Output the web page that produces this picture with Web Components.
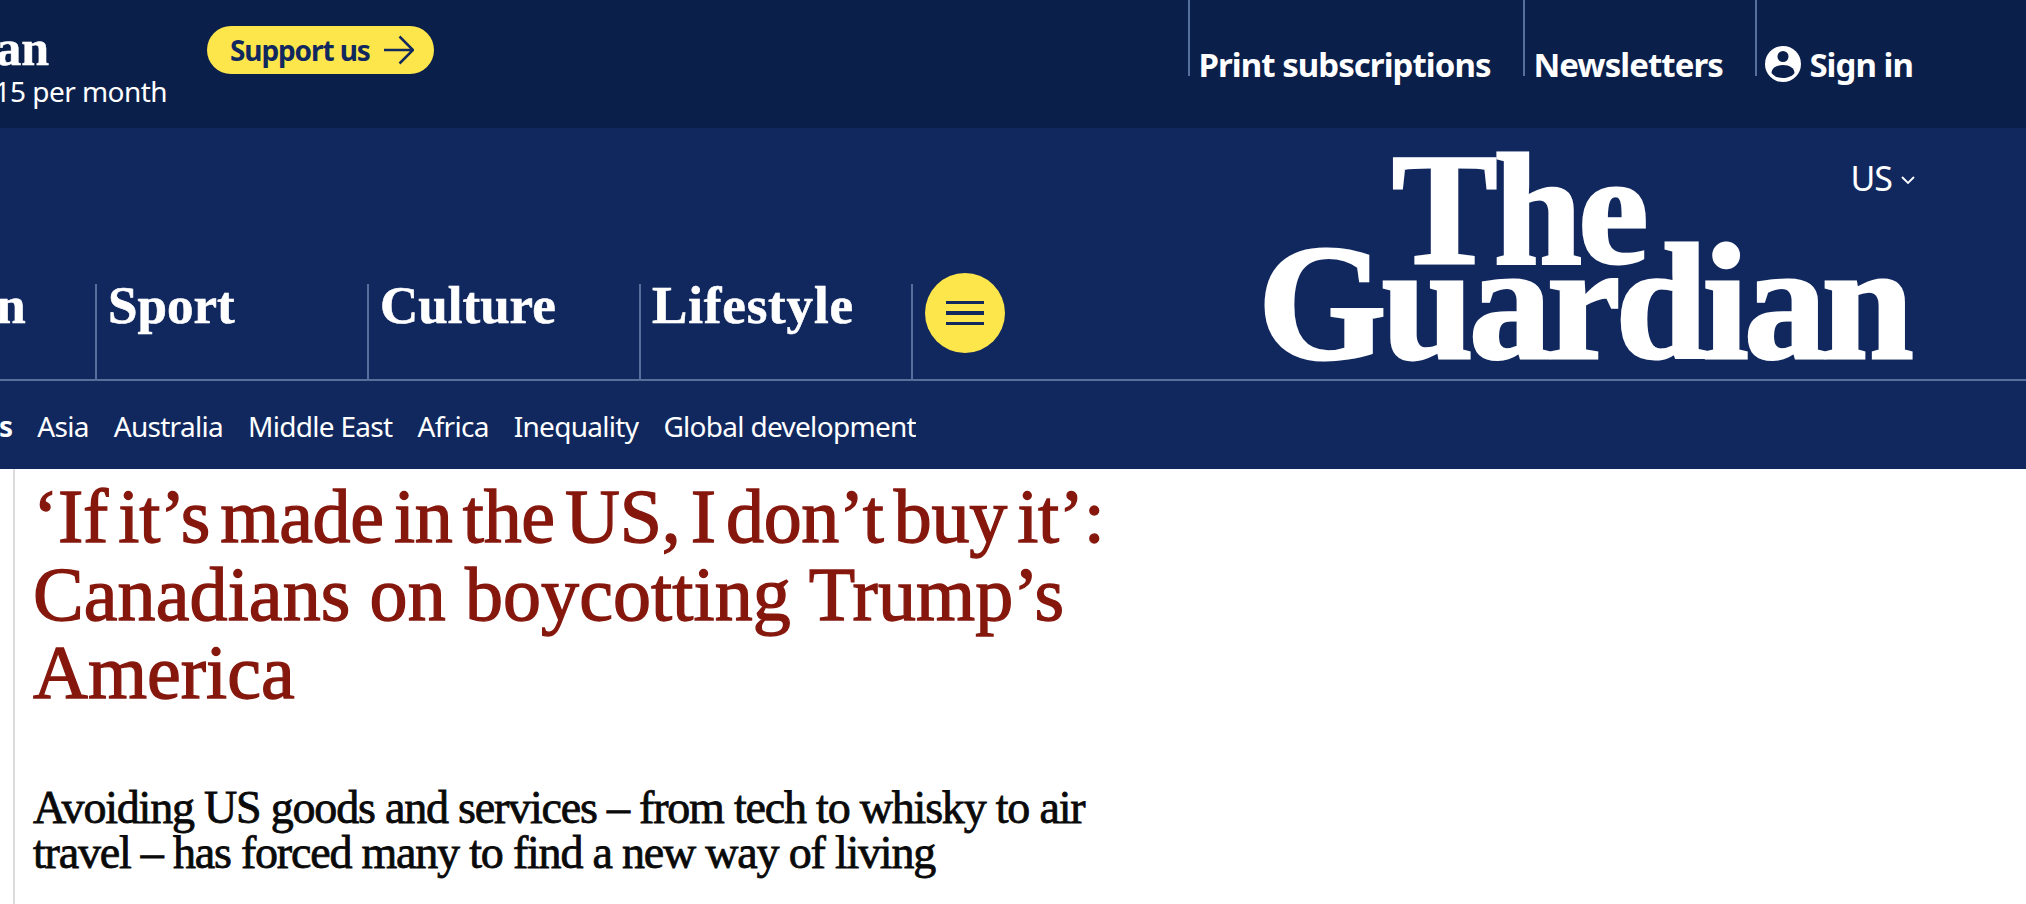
<!DOCTYPE html>
<html lang="en">
<head>
<meta charset="utf-8">
<title>The Guardian</title>
<style>
  html, body { margin: 0; padding: 0; background: #fff; overflow: hidden; }
  body { width: 2026px; height: 904px; font-family: "Liberation Serif", serif; }
</style>
</head>
<body>
<gu-topbar>
  <gu-reader-ask slot="ask"></gu-reader-ask>
  <gu-support-button slot="ask">Support us</gu-support-button>
  <gu-top-link slot="links" width="335">Print subscriptions</gu-top-link>
  <gu-top-link slot="links" width="232">Newsletters</gu-top-link>
  <gu-top-link slot="links" icon>Sign in</gu-top-link>
</gu-topbar>
<gu-masthead>
  <gu-pillar>News</gu-pillar>
  <gu-pillar style="letter-spacing: 0.7px">Opinion</gu-pillar>
  <gu-pillar>Sport</gu-pillar>
  <gu-pillar>Culture</gu-pillar>
  <gu-pillar style="letter-spacing: 0.85px">Lifestyle</gu-pillar>
</gu-masthead>
<gu-subnav></gu-subnav>
<gu-article>
  <span slot="headline" style="letter-spacing: -0.3px; word-spacing: -8.4px">‘If it’s made in the US, I don’t buy it’:</span>
  <span slot="headline" style="letter-spacing: 0.1px">Canadians on boycotting Trump’s</span>
  <span slot="headline">America</span>
  <span slot="standfirst">Avoiding US goods and services – from tech to whisky to air travel – has forced many to find a new way of living</span>
</gu-article>

<script>
const SANS = '"Noto Sans", "Open Sans", sans-serif';

//Barra superior oscura: bloque de apoyo a la izquierda, enlaces a la derecha.
class GuTopbar extends HTMLElement {
  constructor() {
    super();
    this.attachShadow({ mode: "open" });
    this.shadowRoot.innerHTML = `
      <style>
        :host { display: flex; justify-content: space-between; height: 128px; background: #0b1f4b; color: #fff; overflow: hidden; }
        .ask { display: flex; align-items: flex-start; }
        .links { display: flex; padding-right: 113px; }
      </style>
      <div class="ask"><slot name="ask"></slot></div>
      <div class="links"><slot name="links"></slot></div>
    `;
  }
}

class GuReaderAsk extends HTMLElement {
  constructor() {
    super();
    this.attachShadow({ mode: "open" });
    this.shadowRoot.innerHTML = `
      <style>
        :host { display: flex; justify-content: flex-end; width: 167px; height: 128px; overflow: hidden; white-space: nowrap; }
        div { display: flex; flex: none; flex-direction: column; align-items: flex-end; }
        .big { font: bold 50px/54px "Liberation Serif", serif; margin-top: 21px; padding-right: 118px; -webkit-text-stroke: 0.5px #fff; }
        .small { font: 28px/36px ${SANS}; letter-spacing: -0.55px; margin-top: -2px; }
      </style>
      <div>
        <span class="big">Support the Guardian</span>
        <span class="small">Fund the free press with $15 per month</span>
      </div>
    `;
  }
}

class GuSupportButton extends HTMLElement {
  constructor() {
    super();
    this.attachShadow({ mode: "open" });
    this.shadowRoot.innerHTML = `
      <style>
        :host { display: inline-flex; align-items: center; box-sizing: border-box; width: 227px; height: 48px; margin: 26px 0 0 40px; padding-left: 23px; gap: 14px;
                border-radius: 24px; background: #fde64b; color: #11285f; font: bold 28px/48px ${SANS}; letter-spacing: -1.1px; white-space: nowrap; }
        svg { width: 30px; height: 30px; flex: none; }
      </style>
      <slot></slot>
      <svg viewBox="0 0 30 30" fill="none" stroke="#11285f" stroke-width="2.500">
        <path d="M0 15h28.500M15.500 1.500L29 15 15.500 28.500"/>
      </svg>
    `;
  }
}

class GuTopLink extends HTMLElement {
  constructor() {
    super();
    this.attachShadow({ mode: "open" });
    const icon = this.hasAttribute("icon") ? `
      <svg viewBox="0 0 36 36">
        <circle cx="18" cy="18" r="18" fill="#fff"/>
        <circle cx="18" cy="10.500" r="5.500" fill="#0b1f4b"/>
        <path d="M6.500 27c0-5 5-8 11.500-8s11.500 3 11.500 8c-2.500 3.500-7 5-11.500 5s-9-1.500-11.500-5z" fill="#0b1f4b"/>
      </svg>` : "";
    this.shadowRoot.innerHTML = `
      <style>
        :host { display: flex; align-items: flex-start; box-sizing: border-box; height: 76px; padding-left: 8px; border-left: 2px solid #56709c; color: #fff; font: bold 33px/44px ${SANS}; letter-spacing: -0.95px; white-space: nowrap; }
        span { margin-top: 43px; }
        svg { width: 36px; height: 36px; flex: none; margin: 46px 8px 0 0; }
      </style>
      ${icon}<span><slot></slot></span>
    `;
  }
  connectedCallback() {
    if (this.hasAttribute("width")) this.style.width = this.getAttribute("width") + "px";
  }
}

//El logo es texto real: dos palabras con tamaños distintos y muy apretadas.
class GuLogo extends HTMLElement {
  constructor() {
    super();
    this.attachShadow({ mode: "open" });
    this.shadowRoot.innerHTML = `
      <style>
        :host { display: block; color: #fff; font-family: "Liberation Serif", serif; font-weight: bold; text-align: right; -webkit-text-stroke: 3px #fff; white-space: nowrap; }
        span { display: block; line-height: 93px; }
        .the { font-size: 158px; letter-spacing: -3.5px; padding-right: 267px; }
        .guardian { font-size: 165px; letter-spacing: -4.6px; padding-right: 3px; }
      </style>
      <span class="the">The</span>
      <span class="guardian">Guardian</span>
    `;
  }
}

class GuPillar extends HTMLElement {
  constructor() {
    super();
    this.attachShadow({ mode: "open" });
    this.shadowRoot.innerHTML = `
      <style>
        :host { display: block; box-sizing: border-box; flex: none; width: 272px; height: 95px; padding-left: 11px; border-left: 2px solid #56709c; color: #fff; font: bold 53px/42px "Liberation Serif", serif; -webkit-text-stroke: 0.6px #fff; white-space: nowrap; }
      </style>
      <slot></slot>
    `;
  }
}

class GuMenuButton extends HTMLElement {
  constructor() {
    super();
    this.attachShadow({ mode: "open" });
    this.shadowRoot.innerHTML = `
      <style>
        :host { display: flex; flex-direction: column; justify-content: center; align-items: center; gap: 7px; flex: none; width: 80px; height: 80px; margin-left: 12px; margin-top: -11px; border-radius: 50%; background: #fde64b; }
        i { display: block; width: 38px; height: 3.500px; background: #11285f; }
      </style>
      <i></i><i></i><i></i>
    `;
  }
}

class GuMasthead extends HTMLElement {
  constructor() {
    super();
    this.attachShadow({ mode: "open" });
    this.shadowRoot.innerHTML = `
      <style>
        :host { display: flex; justify-content: space-between; box-sizing: border-box; height: 253px; padding-right: 114px; background: #11285f; border-bottom: 2px solid #56709c; overflow: hidden; }
        .pillars { display: flex; justify-content: flex-end; align-items: flex-start; width: 1005px; margin-top: 156px; }
        .pillars-row { display: flex; flex: none; }
        .tail { width: 0; border-left: 2px solid #56709c; height: 95px; flex: none; }
        .brand { display: grid; width: 660px; }
        .brand > * { grid-area: 1 / 1; }
        gu-logo { margin-top: 35px; }
        .edition { justify-self: end; margin: 29px -3px 0 0; display: flex; align-items: center; gap: 9px; height: 42px; color: #fff; font: 34px/42px ${SANS}; letter-spacing: -1px; }
        .edition svg { width: 14px; height: 8px; margin-top: 4px; }
      </style>
      <div class="pillars">
        <div class="pillars-row"><slot></slot></div>
        <div class="tail"></div>
        <gu-menu-button></gu-menu-button>
      </div>
      <div class="brand">
        <gu-logo></gu-logo>
        <div class="edition">US
          <svg viewBox="0 0 14 8" fill="none" stroke="#fff" stroke-width="1.800"><path d="M1 1l6 6 6-6"/></svg>
        </div>
      </div>
    `;
  }
}

class GuSubnav extends HTMLElement {
  constructor() {
    super();
    this.attachShadow({ mode: "open" });
    const items = ["Asia", "Australia", "Middle East", "Africa", "Inequality", "Global development"];
    this.shadowRoot.innerHTML = `
      <style>
        :host { display: block; height: 88px; background: #11285f; color: #fff; font: 28px/91px ${SANS}; letter-spacing: -0.7px; white-space: nowrap; }
        ul { display: flex; justify-content: flex-end; gap: 25px; width: 916px; height: 88px; margin: 0; padding: 0; list-style: none; overflow: hidden; }
        li { flex: none; }
        .current { font-weight: bold; }
      </style>
      <ul>
        <li class="current">Americas</li>
        ${items.map((item) => `<li>${item}</li>`).join("")}
      </ul>
    `;
  }
}

class GuArticle extends HTMLElement {
  constructor() {
    super();
    this.attachShadow({ mode: "open" });
    this.shadowRoot.innerHTML = `
      <style>
        :host { display: block; box-sizing: border-box; height: 435px; margin-left: 13px; padding-left: 18px; border-left: 2px solid #dcdcdc; }
        h1 { width: 1120px; margin: 0; padding-top: 8px; font: 500 76px/78px "Liberation Serif", serif; color: #85170d; -webkit-text-stroke: 1.3px #85170d; white-space: nowrap; }
        ::slotted([slot="headline"]) { display: block; }
        p { width: 1090px; margin: 74px 0 0; font: 46px/45px "Liberation Serif", serif; letter-spacing: -1.2px; color: #0a0a0a; -webkit-text-stroke: 0.8px #0a0a0a; }
      </style>
      <h1><slot name="headline"></slot></h1>
      <p><slot name="standfirst"></slot></p>
    `;
  }
}

customElements.define("gu-topbar", GuTopbar);
customElements.define("gu-reader-ask", GuReaderAsk);
customElements.define("gu-support-button", GuSupportButton);
customElements.define("gu-top-link", GuTopLink);
customElements.define("gu-logo", GuLogo);
customElements.define("gu-pillar", GuPillar);
customElements.define("gu-menu-button", GuMenuButton);
customElements.define("gu-masthead", GuMasthead);
customElements.define("gu-subnav", GuSubnav);
customElements.define("gu-article", GuArticle);
</script>
</body>
</html>
